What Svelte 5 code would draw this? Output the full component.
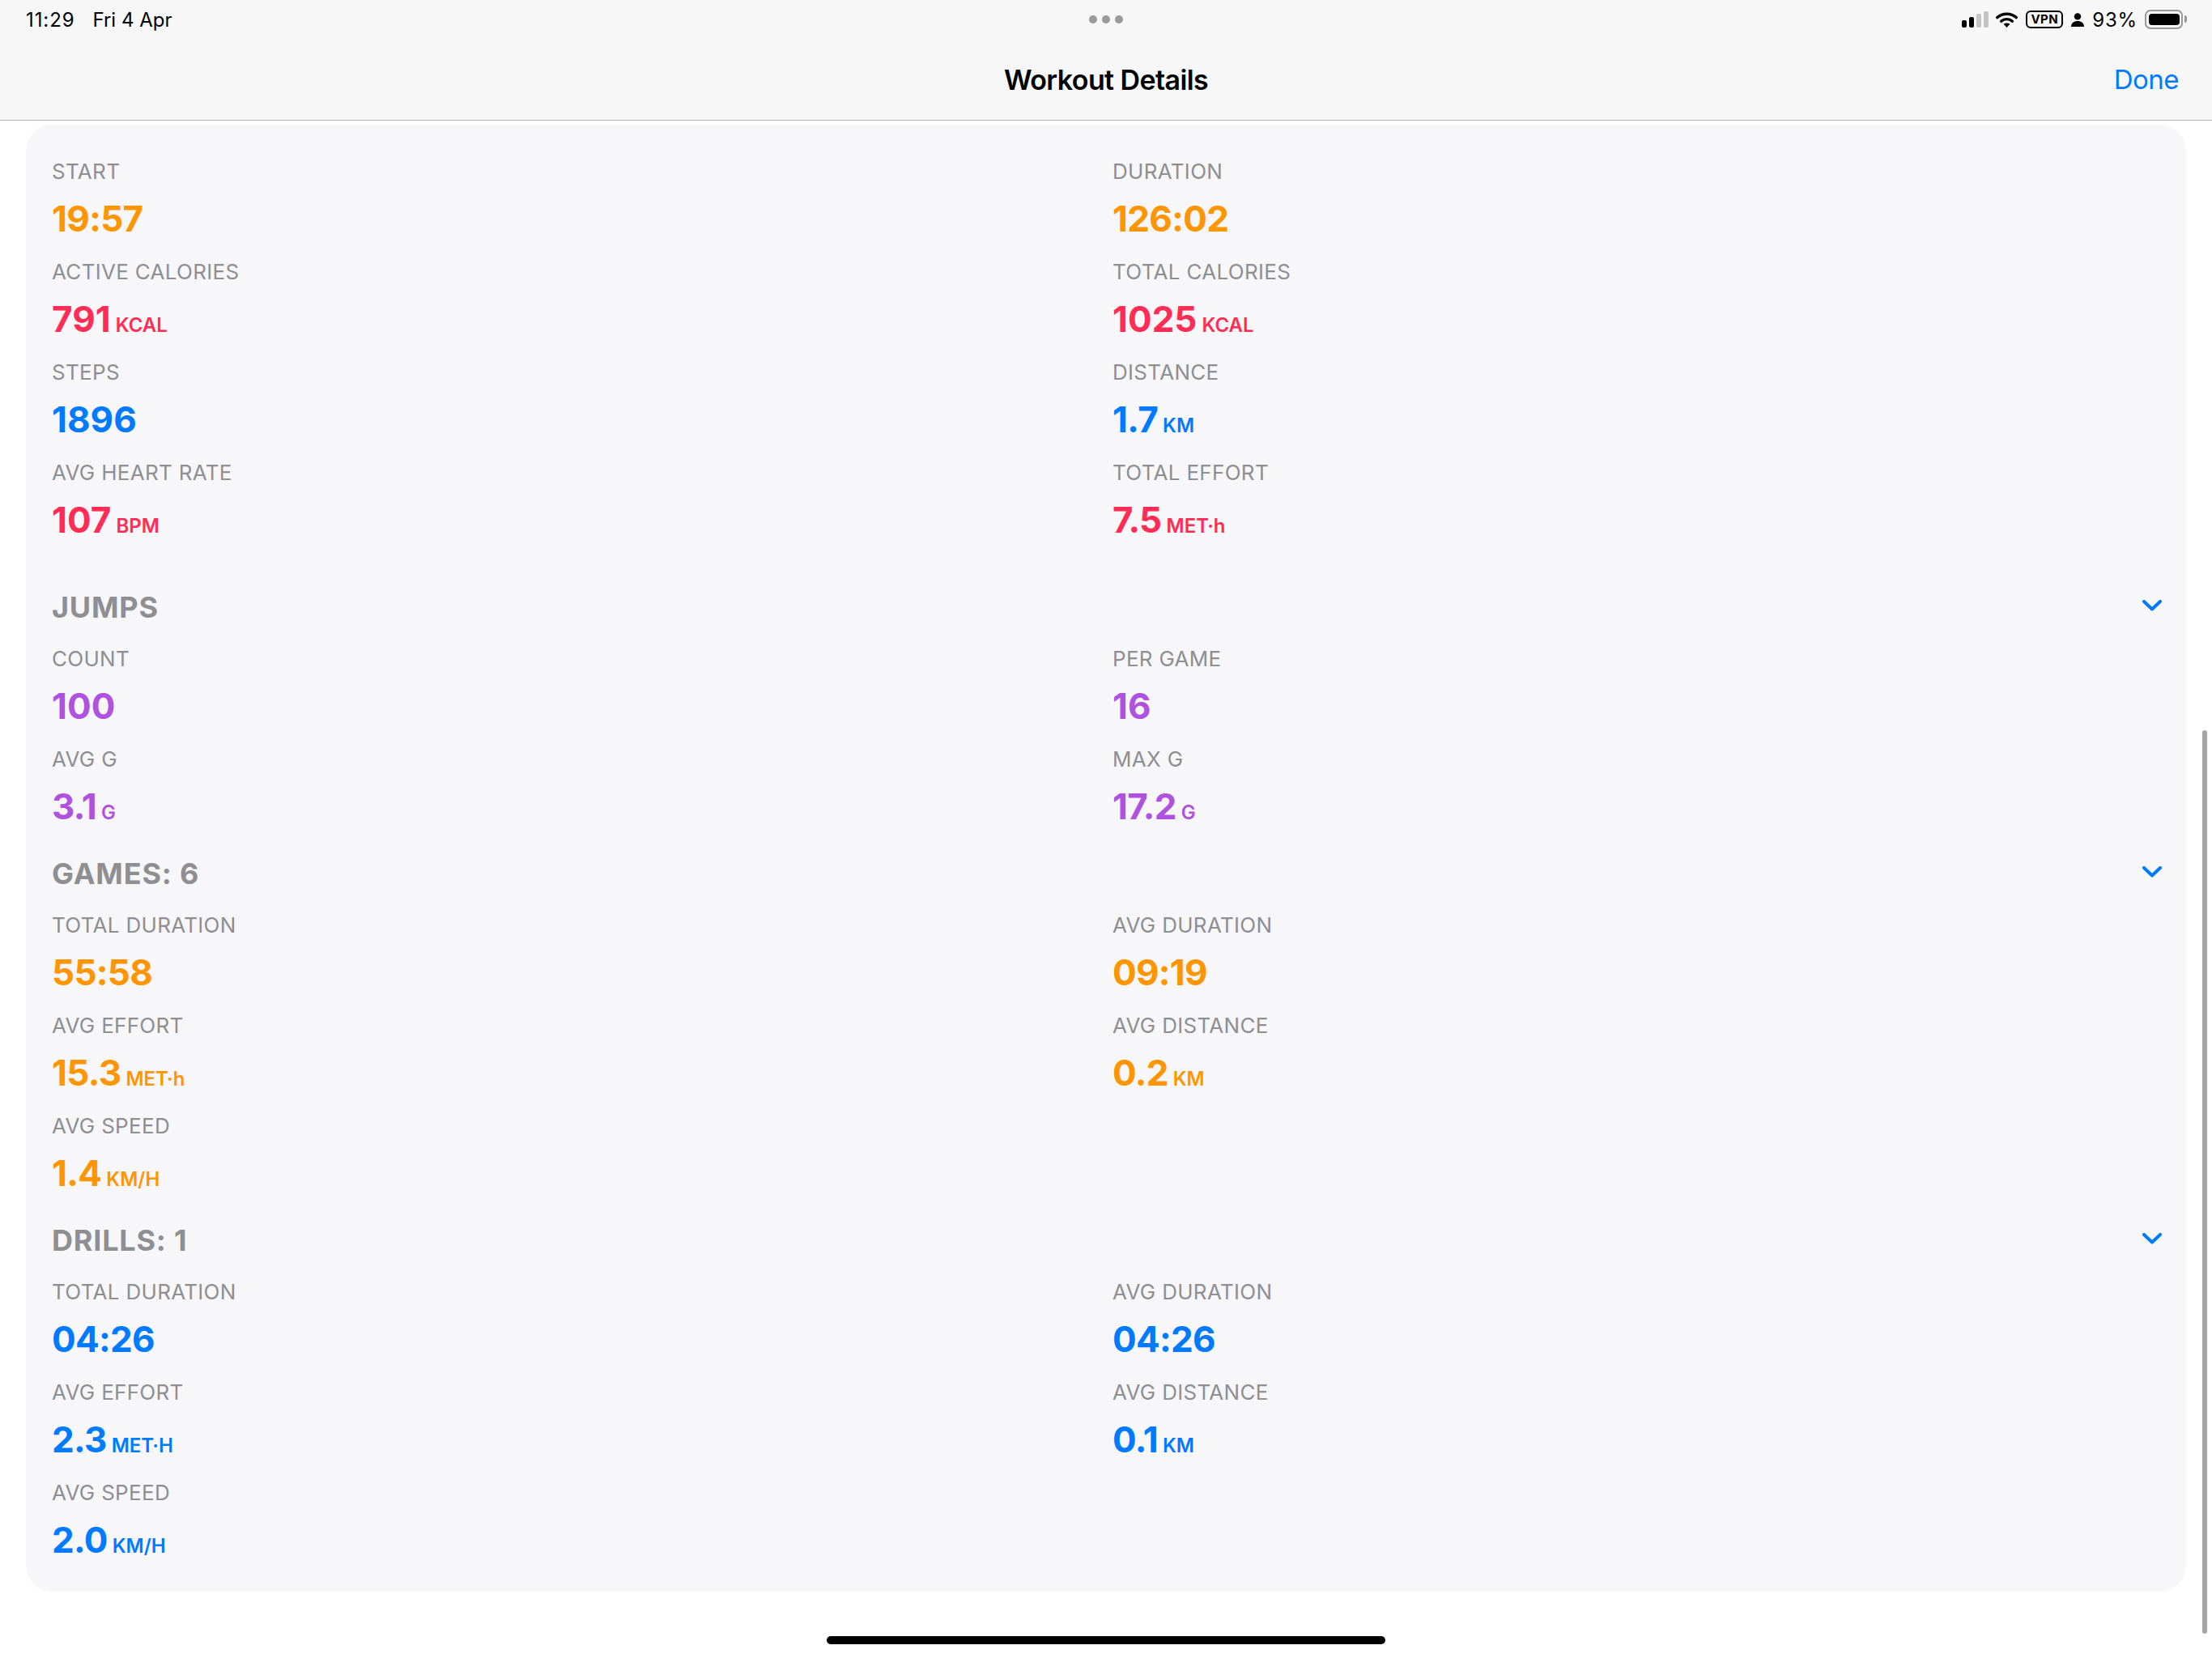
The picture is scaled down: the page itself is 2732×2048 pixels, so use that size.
<script lang="ts">
	type Metric = { label: string; value: string; unit?: string };
	type Section = { title?: string; color: string; metrics: (Metric & { color?: string })[] };

	const orange = '#ff9500';
	const pink = '#ff2d55';
	const blue = '#007aff';
	const purple = '#af52de';

	const sections: Section[] = [
		{
			color: orange,
			metrics: [
				{ label: 'START', value: '19:57', color: orange },
				{ label: 'DURATION', value: '126:02', color: orange },
				{ label: 'ACTIVE CALORIES', value: '791', unit: 'KCAL', color: pink },
				{ label: 'TOTAL CALORIES', value: '1025', unit: 'KCAL', color: pink },
				{ label: 'STEPS', value: '1896', color: blue },
				{ label: 'DISTANCE', value: '1.7', unit: 'KM', color: blue },
				{ label: 'AVG HEART RATE', value: '107', unit: 'BPM', color: pink },
				{ label: 'TOTAL EFFORT', value: '7.5', unit: 'MET·h', color: pink }
			]
		},
		{
			title: 'JUMPS',
			color: purple,
			metrics: [
				{ label: 'COUNT', value: '100' },
				{ label: 'PER GAME', value: '16' },
				{ label: 'AVG G', value: '3.1', unit: 'G' },
				{ label: 'MAX G', value: '17.2', unit: 'G' }
			]
		},
		{
			title: 'GAMES: 6',
			color: orange,
			metrics: [
				{ label: 'TOTAL DURATION', value: '55:58' },
				{ label: 'AVG DURATION', value: '09:19' },
				{ label: 'AVG EFFORT', value: '15.3', unit: 'MET·h' },
				{ label: 'AVG DISTANCE', value: '0.2', unit: 'KM' },
				{ label: 'AVG SPEED', value: '1.4', unit: 'KM/H' }
			]
		},
		{
			title: 'DRILLS: 1',
			color: blue,
			metrics: [
				{ label: 'TOTAL DURATION', value: '04:26' },
				{ label: 'AVG DURATION', value: '04:26' },
				{ label: 'AVG EFFORT', value: '2.3', unit: 'MET·H' },
				{ label: 'AVG DISTANCE', value: '0.1', unit: 'KM' },
				{ label: 'AVG SPEED', value: '2.0', unit: 'KM/H' }
			]
		}
	];

	// Inter's colon and period run wider than the original face
	const isTight = (v: string) => /[:.]/.test(v);
</script>

<div class="page">
	<header class="top">
		<div class="status">
			<div class="when">
				<span class="clock">11:29</span>
				<span>Fri 4 Apr</span>
			</div>
			<div class="dots"><i></i><i></i><i></i></div>
			<div class="indicators">
				<svg class="signal" width="33" height="20" viewBox="0 0 33 20">
					<rect x="0" y="11" width="6" height="9" rx="2" fill="#000" />
					<rect x="9" y="7" width="6" height="13" rx="2" fill="#000" />
					<rect x="18" y="3" width="6" height="17" rx="2" fill="#c4c4c4" />
					<rect x="27" y="0" width="6" height="20" rx="2" fill="#c4c4c4" />
				</svg>
				<svg class="wifi" width="27" height="19" viewBox="0 0 27 19">
					<path d="M1.8 6.6C8.2 0.7 18.8 0.7 25.2 6.6" fill="none" stroke="#000" stroke-width="3.4" stroke-linecap="round" />
					<path d="M6.6 11.2C10.4 7.8 16.6 7.8 20.4 11.2" fill="none" stroke="#000" stroke-width="3.4" stroke-linecap="round" />
					<path d="M9.6 14.8C12 13 15 13 17.4 14.8L13.5 19Z" fill="#000" />
				</svg>
				<span class="vpn">VPN</span>
				<svg class="person" width="16" height="17" viewBox="0 0 16 17">
					<circle cx="8" cy="4.4" r="4.2" fill="#000" />
					<path d="M0 17C0 12.4 3.6 10 8 10C12.4 10 16 12.4 16 17Z" fill="#000" />
				</svg>
				<span class="pct">93%</span>
				<div class="battery"><div class="charge"></div></div>
			</div>
		</div>
		<div class="nav">
			<span></span>
			<span class="title">Workout Details</span>
			<span class="done">Done</span>
		</div>
	</header>

	<main class="content">
		<div class="card">
			{#each sections as s}
				<section class="section">
					{#if s.title}
						<div class="section-head">
							<span class="section-title">{s.title}</span>
							<svg class="chev" width="24" height="14" viewBox="0 0 24 14">
								<polyline points="2,2 12,11.5 22,2" fill="none" stroke={blue} stroke-width="4" stroke-linecap="round" stroke-linejoin="round" />
							</svg>
						</div>
					{/if}
					<div class="grid">
						{#each s.metrics as m}
							<div class="metric">
								<div class="label">{m.label}</div>
								<div class="value" style:color={m.color ?? s.color}>
									<span class:tight={isTight(m.value)}>{m.value}</span>{#if m.unit}<span class="unit">{m.unit}</span>{/if}
								</div>
							</div>
						{/each}
					</div>
				</section>
			{/each}
		</div>
	</main>

	<div class="scrollbar"></div>
	<div class="home"></div>
</div>

<style>
	:global(body) {
		margin: 0;
		background: #fff;
	}
	.page {
		position: relative;
		width: 2732px;
		height: 2048px;
		overflow: hidden;
		background: #fff;
		font-family: Inter, 'Liberation Sans', sans-serif;
		color: #000;
	}
	.top {
		background: #f7f7f7;
		border-bottom: 1px solid #b3b3b3;
		height: 148px;
	}
	.status {
		display: grid;
		grid-template-columns: 1fr auto 1fr;
		align-items: center;
		height: 48px;
		padding: 0 36px 0 32px;
		font-size: 24px;
	}
	.when {
		display: flex;
		gap: 22px;
	}
	.clock {
		letter-spacing: 0.9px;
	}
	.dots {
		display: flex;
		gap: 6px;
		margin-left: 4px;
	}
	.dots i {
		width: 10px;
		height: 10px;
		border-radius: 50%;
		background: #999;
	}
	.indicators {
		display: flex;
		align-items: center;
		justify-content: flex-end;
	}
	.wifi {
		margin-left: 9px;
	}
	.vpn {
		box-sizing: border-box;
		width: 46px;
		height: 22px;
		margin-left: 10px;
		border: 2px solid #000;
		border-radius: 6px;
		font-size: 15px;
		font-weight: 700;
		line-height: 18px;
		text-align: center;
		letter-spacing: 0.5px;
	}
	.person {
		margin-left: 10px;
	}
	.pct {
		margin-left: 10px;
		letter-spacing: 0.8px;
	}
	.battery {
		position: relative;
		box-sizing: border-box;
		width: 47px;
		height: 24px;
		margin-left: 9px;
		padding: 3px;
		border: 2px solid #999;
		border-radius: 7px;
	}
	.battery::after {
		content: '';
		position: absolute;
		right: -7px;
		top: 5px;
		width: 3px;
		height: 9px;
		background: #999;
		border-radius: 0 3px 3px 0;
	}
	.charge {
		width: 38px;
		height: 100%;
		border-radius: 4px;
		background: #000;
	}
	.nav {
		display: grid;
		grid-template-columns: 1fr auto 1fr;
		align-items: center;
		height: 100px;
		padding: 0 41px;
		font-size: 34px;
	}
	.title {
		font-weight: 600;
		letter-spacing: -0.6px;
	}
	.done {
		justify-self: end;
		color: #007aff;
		font-size: 33px;
		letter-spacing: -0.5px;
	}
	.content {
		padding: 5px 32px 0;
	}
	.card {
		box-sizing: border-box;
		height: 1812px;
		padding: 38px 30px 26px 32px;
		border-radius: 32px;
		background: #f7f7fa;
	}
	.section + .section {
		margin-top: 15px;
	}
	.section:first-child {
		margin-bottom: 40px;
	}
	.section-head {
		display: flex;
		align-items: center;
		justify-content: space-between;
		height: 60px;
		margin-bottom: 14px;
		color: #8e8e93;
	}
	.section-title {
		font-size: 36px;
		font-weight: 700;
		letter-spacing: 0.8px;
	}
	.chev {
		margin-top: -4px;
	}
	.grid {
		display: grid;
		grid-template-columns: 1310px 1fr;
		row-gap: 8px;
	}
	.metric {
		height: 116px;
	}
	.label {
		height: 40px;
		font-size: 26px;
		line-height: 40px;
		letter-spacing: 0.3px;
		color: #8e8e93;
	}
	.value {
		height: 76px;
		font-size: 44px;
		font-weight: 700;
		line-height: 76px;
		white-space: nowrap;
	}
	.tight {
		letter-spacing: -0.7px;
	}
	.unit {
		margin-left: 6px;
		font-size: 24px;
		font-weight: 600;
	}
	.scrollbar {
		position: absolute;
		left: 2720px;
		top: 902px;
		width: 6px;
		height: 1116px;
		border-radius: 3px;
		background: #a6a6a6;
	}
	.home {
		position: absolute;
		left: 1021px;
		top: 2021px;
		width: 690px;
		height: 10px;
		border-radius: 5px;
		background: #000;
	}
</style>
